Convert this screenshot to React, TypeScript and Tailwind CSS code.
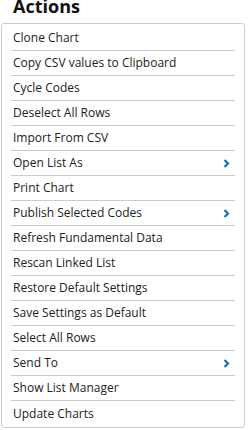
import React from "react";

const items: { label: string; sub?: boolean }[] = [
  { label: "Clone Chart" },
  { label: "Copy CSV values to Clipboard" },
  { label: "Cycle Codes" },
  { label: "Deselect All Rows" },
  { label: "Import From CSV" },
  { label: "Open List As", sub: true },
  { label: "Print Chart" },
  { label: "Publish Selected Codes", sub: true },
  { label: "Refresh Fundamental Data" },
  { label: "Rescan Linked List" },
  { label: "Restore Default Settings" },
  { label: "Save Settings as Default" },
  { label: "Select All Rows" },
  { label: "Send To", sub: true },
  { label: "Show List Manager" },
  { label: "Update Charts" },
];

function Chevron() {
  return (
    <svg width="7" height="9" viewBox="0 0 7 9" className="mr-[5px]">
      <path d="M1.5 1 L5 4.5 L1.5 8" fill="none" stroke="#1f6cb3" strokeWidth="2.2" />
    </svg>
  );
}

export default function App() {
  return (
    <div className="w-[248px] h-[430px] bg-white flex flex-col overflow-hidden" style={{ fontFamily: '"Open Sans", sans-serif' }}>
      <div className="pl-[13px] text-[18px] font-bold leading-[18px] -mt-[3px] text-[#111]">Actions</div>
      <div className="ml-[1px] mt-[8px] w-[244px] border border-[#cccccc] rounded-[3px] px-[9px] pt-[2px] pb-[1px]">
        {items.map((it, i) => (
          <div
            key={it.label}
            className={
              "h-[25px] flex items-center justify-between pl-[2px] text-[12px] text-[#222] " +
              (i < items.length - 1 ? "border-b border-[#cccccc]" : "")
            }
          >
            <span>{it.label}</span>
            {it.sub ? <Chevron /> : null}
          </div>
        ))}
      </div>
    </div>
  );
}
